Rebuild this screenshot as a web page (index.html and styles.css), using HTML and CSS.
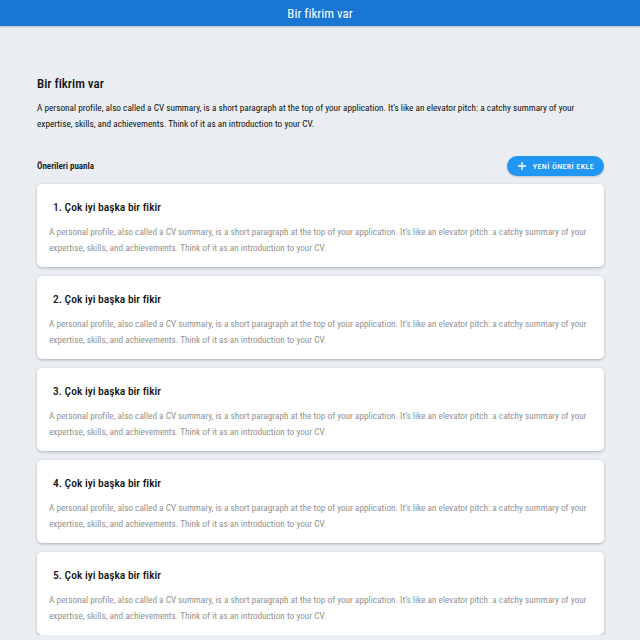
FILE: index.html
```html
<!DOCTYPE html>
<html lang="tr">
<head>
<meta charset="utf-8">
<link rel="stylesheet" href="styles.css">
</head>
<body>
<header class="appbar">Bir fikrim var</header>
<main class="page">
  <h1 class="title">Bir fikrim var</h1>
  <p class="intro">A personal profile, also called a CV summary, is a short paragraph at the top of your application. It’s like an elevator pitch: a catchy summary of your expertise, skills, and achievements. Think of it as an introduction to your CV.</p>
  <div class="toolbar">
    <span class="label">Önerileri puanla</span>
    <button class="add-btn"><svg width="10" height="10" viewBox="0 0 10 10"><path d="M5 1v8M1 5h8" stroke="#fff" stroke-width="1.3"/></svg>YENİ ÖNERİ EKLE</button>
  </div>
  <div class="list">
    <div class="card"><h2 class="card-title">1. Çok iyi başka bir fikir</h2><p class="card-text">A personal profile, also called a CV summary, is a short paragraph at the top of your application. It’s like an elevator pitch: a catchy summary of your expertise, skills, and achievements. Think of it as an introduction to your CV.</p></div>
    <div class="card"><h2 class="card-title">2. Çok iyi başka bir fikir</h2><p class="card-text">A personal profile, also called a CV summary, is a short paragraph at the top of your application. It’s like an elevator pitch: a catchy summary of your expertise, skills, and achievements. Think of it as an introduction to your CV.</p></div>
    <div class="card"><h2 class="card-title">3. Çok iyi başka bir fikir</h2><p class="card-text">A personal profile, also called a CV summary, is a short paragraph at the top of your application. It’s like an elevator pitch: a catchy summary of your expertise, skills, and achievements. Think of it as an introduction to your CV.</p></div>
    <div class="card"><h2 class="card-title">4. Çok iyi başka bir fikir</h2><p class="card-text">A personal profile, also called a CV summary, is a short paragraph at the top of your application. It’s like an elevator pitch: a catchy summary of your expertise, skills, and achievements. Think of it as an introduction to your CV.</p></div>
    <div class="card"><h2 class="card-title">5. Çok iyi başka bir fikir</h2><p class="card-text">A personal profile, also called a CV summary, is a short paragraph at the top of your application. It’s like an elevator pitch: a catchy summary of your expertise, skills, and achievements. Think of it as an introduction to your CV.</p></div>
  </div>
</main>
</body>
</html>
```
FILE: styles.css
```css
* { box-sizing: border-box; }
html, body { margin: 0; }
body {
  background: #eaeef2;
  font-family: Roboto, "Noto Sans", sans-serif;
  font-stretch: 85%;
  color: #111;
}
.appbar {
  height: 26px;
  background: #1976d2;
  color: #fff;
  font-size: 13px;
  display: flex;
  align-items: center;
  justify-content: center;
  box-shadow: 0 1px 2px rgba(0,0,0,0.2);
}
.page {
  padding: 49px 36px 0 37px;
}
.title {
  margin: 0;
  font-size: 13px;
  font-weight: 500;
  line-height: 18px;
}
.intro {
  margin: 7px 0 0;
  font-size: 9.25px;
  line-height: 16px;
}
.toolbar {
  margin-top: 24px;
  display: flex;
  justify-content: space-between;
  align-items: center;
}
.label {
  font-size: 9px;
  font-weight: 600;
}
.add-btn {
  display: flex;
  align-items: center;
  gap: 6px;
  height: 20px;
  padding: 0 10px 0 10px;
  border: 0;
  border-radius: 10px;
  background: #2196f3;
  color: #fff;
  font-family: inherit;
  font-stretch: 85%;
  font-size: 8px;
  font-weight: 500;
  letter-spacing: 0.4px;
  box-shadow: 0 1px 2px rgba(0,0,0,0.2);
}
.list {
  margin-top: 8px;
  display: flex;
  flex-direction: column;
  gap: 9px;
}
.card {
  height: 83px;
  background: #fff;
  border-radius: 5px;
  padding: 16px 12px 0 12px;
  box-shadow: 0 1px 3px rgba(0,0,0,0.25);
}
.card-title {
  margin: 0 0 0 4px;
  font-size: 11.5px;
  font-weight: 500;
  line-height: 15px;
}
.card-text {
  margin: 9px 0 0;
  font-size: 9.25px;
  line-height: 16px;
  color: #929292;
}
```
